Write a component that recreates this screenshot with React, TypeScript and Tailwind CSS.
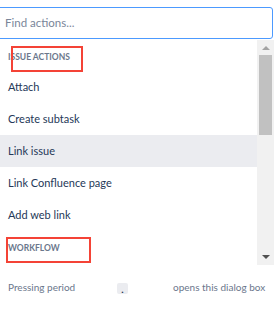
import React from "react";

const items = [
  { label: "Attach" },
  { label: "Create subtask" },
  { label: "Link issue", active: true },
  { label: "Link Confluence page" },
  { label: "Add web link" },
];

export default function App() {
  return (
    <div
      className="relative w-[279px] h-[309px] overflow-hidden bg-white"
      style={{ fontFamily: 'Lato, "Open Sans", sans-serif' }}
    >
      <div className="pt-[7px] -ml-[2px]">
        <div className="w-[275px] h-[32px] border border-[#4c9aff] rounded-r-[3px] flex items-center pl-[6px] text-[11.5px] text-[#7a869a]">
          Find actions...
        </div>
      </div>

      <div className="flex h-[225px] mt-[1px]">
        <div className="w-[257px]">
          <div className="h-[31px] flex items-center pl-[8px] text-[8.5px] font-bold uppercase text-[#6b778c] pt-[3px]">
            Issue actions
          </div>
          {items.map((it) => (
            <div
              key={it.label}
              className={`h-[32px] flex items-center pl-[8px] text-[11px] text-[#253858] ${it.active ? "bg-[#ebecf0]" : ""}`}
            >
              {it.label}
            </div>
          ))}
          <div className="h-[34px] flex items-center pl-[8px] text-[8.5px] font-bold uppercase text-[#6b778c]">
            Workflow
          </div>
        </div>
        <div className="w-[17px] bg-[#f1f1f1] flex flex-col items-center">
          <div className="h-[15px] flex items-center justify-center">
            <div className="w-0 h-0 border-l-[4px] border-r-[4px] border-b-[4px] border-l-transparent border-r-transparent border-b-[#a3a3a3]" />
          </div>
          <div className="w-[13px] h-[80px] bg-[#c1c1c1]" />
          <div className="flex-1" />
          <div className="h-[17px] flex items-center justify-center">
            <div className="w-0 h-0 border-l-[4px] border-r-[4px] border-t-[4px] border-l-transparent border-r-transparent border-t-[#505050]" />
          </div>
        </div>
      </div>

      <div className="flex items-center h-[44px] pl-[8px] text-[10px] text-[#6b778c] whitespace-nowrap">
        <span className="w-[109px]">Pressing period</span>
        <span className="w-[11px] h-[11px] mt-[2px] bg-[#ebecf0] rounded-[2px] flex items-end justify-center text-[10px] leading-[9px] font-bold text-[#172b4d]">
          .
        </span>
        <span className="ml-[45px]">opens this dialog box</span>
      </div>

      <div className="absolute left-[11px] top-[46px] w-[72px] h-[26px] border-2 border-[#f44336]" />
      <div className="absolute left-[6px] top-[237px] w-[85px] h-[26px] border-2 border-[#f44336]" />
    </div>
  );
}
